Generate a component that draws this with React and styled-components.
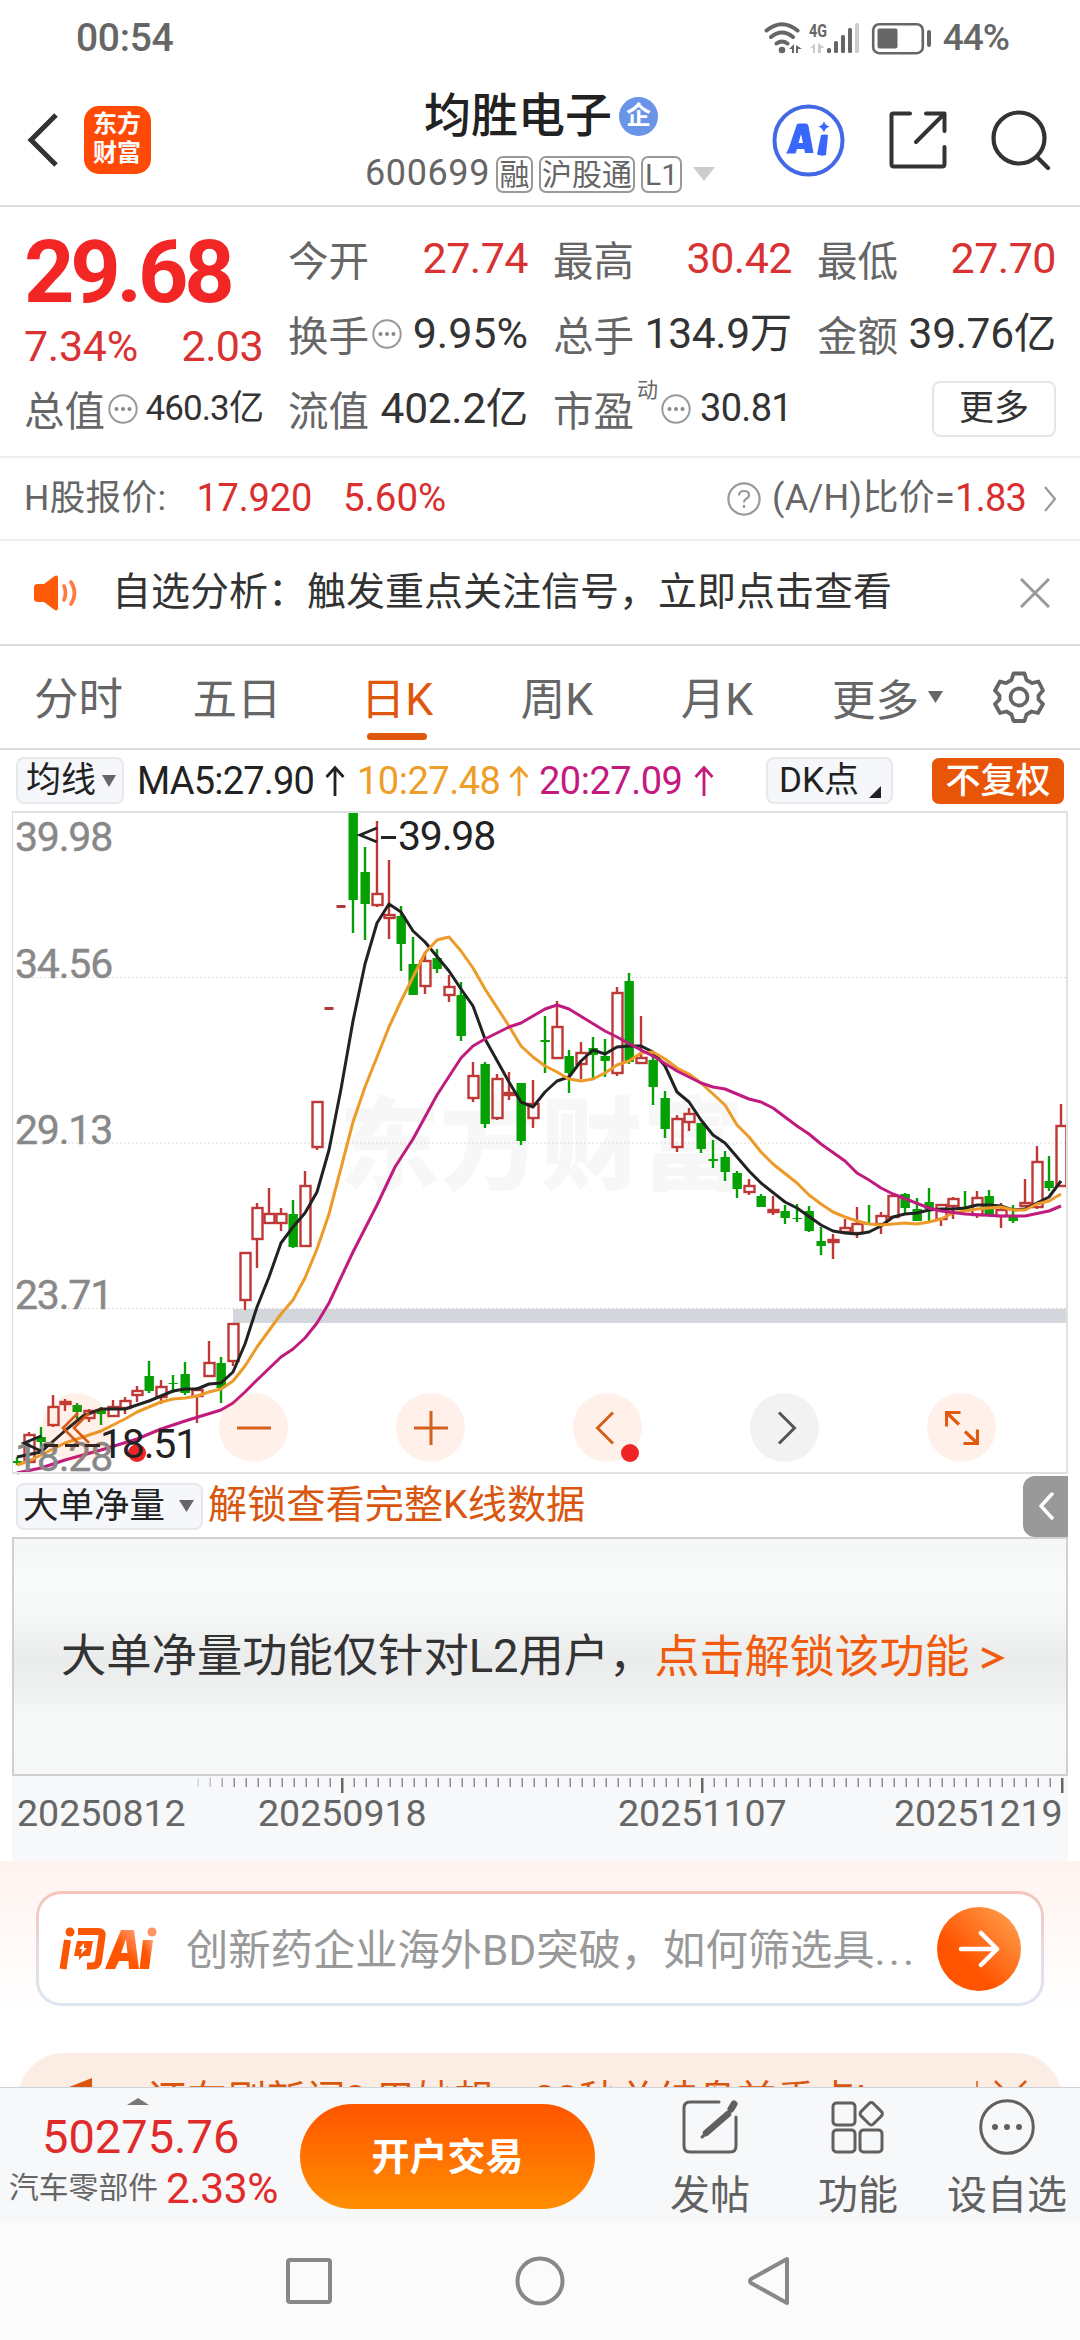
import styled, { createGlobalStyle } from "styled-components";

const GlobalStyle = createGlobalStyle`
  * { box-sizing: border-box; }
  body {
    margin: 0;
    background: #fff;
    font-family: Roboto, "Noto Sans CJK SC", sans-serif;
    color: #333;
  }
  svg { display: block; flex: none; }
`;

const Screen = styled.div`
  width: 1080px;
  height: 2340px;
  overflow: hidden;
  display: flex;
  flex-direction: column;
`;

const Txt = styled.span`
  font-size: ${(p) => p.$size}px;
  line-height: 1.2;
  color: ${(p) => p.$color || "inherit"};
  font-weight: ${(p) => p.$weight || 400};
  letter-spacing: ${(p) => p.$ls || 0}px;
  white-space: nowrap;
`;

/* ---------- status bar ---------- */

const StatusBar = styled.div`
  height: 75px;
  flex: none;
  display: flex;
  align-items: center;
  justify-content: space-between;
  padding: 2px 71px 0 76px;
  color: #666;
`;

const StatusRight = styled.div`
  display: flex;
  align-items: center;
  gap: 10px;
`;

/* ---------- header ---------- */

const Header = styled.header`
  height: 132px;
  flex: none;
  display: grid;
  grid-template-columns: 365px 350px 1fr;
  border-bottom: 2px solid #dcdcdc;
`;

const HeaderLeft = styled.div`
  display: flex;
  align-items: center;
  gap: 26px;
  padding-left: 27px;
`;

const BrandLogo = styled.div`
  width: 67px;
  height: 68px;
  border-radius: 15px;
  background: #ff4a05;
  color: #fff;
  font-size: 24px;
  line-height: 29px;
  font-weight: 700;
  padding: 4px 9px;
`;

const HeaderCenter = styled.div`
  padding-top: 14px;
`;

const TitleLine = styled.div`
  display: flex;
  align-items: center;
  gap: 7px;
  height: 54px;
  padding-left: 59px;
`;

const CompanyBadge = styled.span`
  width: 39px;
  height: 39px;
  border-radius: 50%;
  background: #6a94e8;
  color: #fff;
  font-size: 25px;
  line-height: 38px;
  font-weight: 700;
  text-align: center;
`;

const CodeLine = styled.div`
  display: flex;
  align-items: center;
  height: 62px;
`;

const Tag = styled.span`
  height: 37px;
  width: ${(p) => p.$w}px;
  margin-left: ${(p) => p.$ml || 6}px;
  border: 2px solid #999;
  border-radius: 7px;
  color: #666;
  font-size: 30px;
  line-height: 33px;
  display: flex;
  justify-content: center;
  white-space: nowrap;
`;

const HeaderRight = styled.div`
  display: flex;
  align-items: center;
  justify-content: space-between;
  padding: 0 29px 0 57px;
`;

/* ---------- quote ---------- */

const Quote = styled.section`
  height: 251px;
  flex: none;
  padding: 14px 0 0 24px;
  display: grid;
  grid-template-columns: 239px 240px 239px 239px;
  grid-template-rows: 75px 75px 75px;
  column-gap: 25px;
  border-bottom: 2px solid #eee;
`;

const PriceBlock = styled.div`
  grid-row: 1 / 3;
  display: flex;
  flex-direction: column;
`;

const BigPrice = styled.div`
  height: 103px;
  font-size: 88px;
  line-height: 102px;
  font-weight: 700;
  letter-spacing: -4.2px;
  color: #f32626;
`;

const Field = styled.div`
  display: flex;
  align-items: center;
  justify-content: space-between;
  height: ${(p) => p.$h || 75}px;
`;

const FieldLabel = styled.span`
  display: flex;
  align-items: center;
  gap: 3px;
  font-size: 40.5px;
  color: #666;
  white-space: nowrap;
`;

const Superscript = styled.span`
  font-size: 21px;
  line-height: 22px;
  align-self: flex-start;
`;

const MoreButton = styled.button`
  justify-self: end;
  align-self: center;
  width: 124px;
  height: 56px;
  border: 2px solid #e6e6e6;
  border-radius: 8px;
  background: #fff;
  font: 400 35px/50px Roboto, "Noto Sans CJK SC", sans-serif;
  color: #333;
  padding: 0;
`;

const HShareRow = styled.div`
  height: 83px;
  flex: none;
  display: flex;
  align-items: center;
  padding: 0 23px 0 24px;
  border-bottom: 2px solid #eee;
  color: #666;
`;

const Spacer = styled.div`
  width: ${(p) => p.$w || 0}px;
  flex: ${(p) => (p.$w ? "none" : 1)};
`;

const NoticeRow = styled.div`
  height: 105px;
  flex: none;
  display: flex;
  align-items: center;
  padding: 0 30px 0 33px;
  border-bottom: 2px solid #dcdcdc;
`;

/* ---------- tabs ---------- */

const Tabs = styled.nav`
  height: 104px;
  flex: none;
  display: flex;
  align-items: center;
  border-bottom: 2px solid #dcdcdc;
`;

const Tab = styled.div`
  width: ${(p) => (p.$first ? 157 : 160)}px;
  height: 102px;
  display: flex;
  flex-direction: column;
  align-items: center;
  padding-top: 24px;
  font-size: 44.5px;
  line-height: 60px;
  color: ${(p) => (p.$active ? "#df560d" : "#666")};
  &::after {
    content: "";
    width: 60px;
    height: 7px;
    margin-top: 3px;
    border-radius: 4px;
    background: ${(p) => (p.$active ? "#df560d" : "transparent")};
  }
`;

const TabMore = styled.div`
  display: flex;
  align-items: center;
  gap: 9px;
  padding-left: 35px;
  width: 196px;
  font-size: 43.5px;
  color: #666;
  white-space: nowrap;
`;

const IndicatorBar = styled.div`
  height: 61px;
  flex: none;
  display: flex;
  align-items: center;
  padding: 0 16px;
`;

const Chip = styled.div`
  width: ${(p) => p.$w}px;
  height: 47px;
  display: flex;
  align-items: center;
  gap: ${(p) => p.$gap || 6}px;
  padding-left: ${(p) => p.$pl || 8}px;
  border: 2px solid #e6e8ec;
  border-radius: 8px;
  background: #f6f7fa;
  color: #222;
  font-size: ${(p) => p.$size || 35}px;
  line-height: 42px;
  white-space: nowrap;
`;

const MaText = styled.span`
  width: ${(p) => p.$w}px;
  display: flex;
  align-items: center;
  justify-content: space-between;
  font-size: 38px;
  letter-spacing: ${(p) => p.$ls}px;
  color: ${(p) => p.$color};
`;

const AdjustButton = styled.div`
  width: 132px;
  height: 46px;
  border-radius: 7px;
  background: #e95506;
  color: #fff;
  font-size: 35px;
  font-weight: 500;
  line-height: 48px;
  text-align: center;
`;

/* ---------- chart ---------- */

const ChartBox = styled.div`
  position: relative;
  height: 664px;
  flex: none;
  padding-left: 12px;
`;

const ChartControls = styled.div`
  position: absolute;
  left: 42px;
  top: 582px;
  display: flex;
  gap: 108px;
`;

const RoundButton = styled.div`
  position: relative;
  width: 69px;
  height: 69px;
  border-radius: 50%;
  background: ${(p) => (p.$muted ? "#f2f2f2" : "rgba(255, 90, 10, 0.085)")};
  display: flex;
  align-items: center;
  justify-content: center;
`;

const RedDot = styled.span`
  position: absolute;
  left: ${(p) => p.$x}px;
  top: 51px;
  width: 18px;
  height: 18px;
  border-radius: 50%;
  background: #ee2524;
`;

const LowLabel = styled.span`
  position: absolute;
  left: 100px;
  top: 609px;
  font-size: 41px;
  line-height: 48px;
  letter-spacing: -1.2px;
  color: #222;
`;

const SubHeader = styled.div`
  height: 62px;
  flex: none;
  display: flex;
  align-items: center;
  padding: 0 12px 0 16px;
`;

const CollapseHandle = styled.div`
  width: 45px;
  height: 61px;
  border-radius: 12px 0 0 12px;
  background: #999;
  display: flex;
  align-items: center;
  justify-content: center;
`;

const LockedPanel = styled.div`
  height: 239px;
  flex: none;
  width: 1056px;
  margin-left: 12px;
  border: 2px solid #d0d0d0;
  background: linear-gradient(#f5f7f6, #f9fafa 18%, #f6f7f7 32%, #eaecec 52%, #eff0f0 63%, #f8f9f9 78%, #f6f7f7);
  display: flex;
  align-items: center;
  padding: 2px 0 0 47px;
  color: #333;
`;

const Axis = styled.div`
  height: 85px;
  flex: none;
  width: 1056px;
  margin-left: 12px;
  background: #f7f8fa;
`;

const AxisLabels = styled.div`
  display: grid;
  grid-template-columns: 241px 360px 276px 1fr;
  padding-left: 5px;
  margin-top: -2px;
`;

/* ---------- ask ai ---------- */

const AskSection = styled.div`
  height: 226px;
  flex: none;
  padding: 30px 18px 0;
  overflow: hidden;
  background: linear-gradient(#fff3ef, #fffdfc 55%, #fff 70%);
`;

const AskBox = styled.div`
  width: 1008px;
  height: 115px;
  margin-left: 18px;
  border: 3px solid transparent;
  border-radius: 25px;
  background: linear-gradient(#fff, #fff) padding-box,
    linear-gradient(#f5c4bb, #e6dbe6 60%, #dde6f2) border-box;
  display: flex;
  align-items: center;
  padding: 0 20px 0 20px;
`;

const Placeholder = styled.div`
  padding-top: 4px;
  font-size: 42.3px;
  line-height: 50px;
  color: #999;
  white-space: nowrap;
`;

const Ellipsis = styled.span`
  letter-spacing: 3px;
`;

const GoButton = styled.div`
  width: 84px;
  height: 84px;
  border-radius: 50%;
  background: linear-gradient(45deg, #ff5500 35%, #ff9a48 90%);
  display: flex;
  align-items: center;
  justify-content: center;
`;

const Banner = styled.div`
  height: 100px;
  margin-top: 47px;
  border-radius: 46px;
  background: #fcede4;
  display: flex;
  align-items: flex-start;
  padding: 24px 34px 0 46px;
  color: #d9560f;
`;

/* ---------- bottom ---------- */

const BottomBar = styled.div`
  height: 135px;
  flex: none;
  border-top: 1px solid #cfd3da;
  background: #f7f8fa;
  display: flex;
`;

const SectorBox = styled.div`
  width: 300px;
  padding: 10px 0 0 9px;
`;

const SectorIndex = styled.div`
  padding-left: 33px;
  font-size: 47px;
  line-height: 64px;
  color: #e02b2b;
`;

const SectorLine = styled.div`
  display: flex;
  align-items: center;
  gap: 8px;
  height: 38px;
`;

const TradeButton = styled.div`
  width: 295px;
  height: 105px;
  margin-top: 16px;
  border-radius: 53px;
  background: linear-gradient(#ff5500, #ff8e00);
  color: #fff;
  font-size: 38px;
  font-weight: 700;
  line-height: 107px;
  text-align: center;
`;

const Action = styled.div`
  width: ${(p) => p.$w}px;
  margin-left: ${(p) => p.$ml}px;
  padding-top: 11px;
  display: flex;
  flex-direction: column;
  align-items: center;
  font-size: 40px;
  line-height: 48px;
  gap: 17px;
  color: #606060;
  white-space: nowrap;
`;

const NavBar = styled.div`
  flex: 1;
  background: #fbfbfc;
  display: flex;
  align-items: center;
  justify-content: space-between;
  padding: 0 289px 0 285px;
`;

/* [kind, high, open/close top, bottom, low] in screen pixels, one every 12px */
const CANDLES = [
  ["g", 1458, 1462, 1464, 1466], ["r", 1433, 1436, 1463, 1464], ["g", 1428, 1438, 1443, 1448],
  ["r", 1396, 1408, 1426, 1428], ["r", 1400, 1403, 1405, 1412], ["g", 1404, 1406, 1413, 1420],
  ["r", 1410, 1412, 1419, 1423], ["g", 1408, 1410, 1415, 1426], ["r", 1401, 1408, 1417, 1417],
  ["r", 1398, 1402, 1409, 1415], ["r", 1387, 1392, 1396, 1403], ["g", 1362, 1377, 1392, 1394],
  ["r", 1381, 1388, 1398, 1405], ["g", 1376, 1384, 1385, 1394], ["g", 1363, 1375, 1394, 1396],
  ["r", 1388, 1391, 1397, 1424], ["r", 1342, 1364, 1377, 1377], ["g", 1358, 1364, 1389, 1404],
  ["r", 1324, 1325, 1362, 1367], ["r", 1254, 1254, 1301, 1311], ["r", 1204, 1209, 1240, 1269],
  ["r", 1189, 1215, 1224, 1224], ["r", 1209, 1215, 1224, 1232], ["g", 1201, 1215, 1248, 1249],
  ["r", 1172, 1187, 1247, 1247], ["r", 1102, 1103, 1148, 1151], ["d", 1009, 1009, 1010, 1010],
  ["d", 907, 907, 908, 908], ["g", 813, 813, 901, 934], ["g", 848, 873, 905, 941],
  ["r", 822, 895, 906, 908], ["r", 861, 916, 919, 940], ["g", 907, 917, 945, 972],
  ["g", 938, 965, 996, 996], ["r", 954, 962, 987, 995], ["g", 950, 959, 970, 974],
  ["r", 976, 988, 996, 1003], ["g", 983, 996, 1037, 1042], ["r", 1063, 1077, 1099, 1103],
  ["g", 1063, 1065, 1125, 1129], ["r", 1075, 1080, 1119, 1121], ["r", 1073, 1094, 1096, 1101],
  ["g", 1084, 1084, 1142, 1146], ["r", 1081, 1105, 1119, 1129], ["g", 1017, 1041, 1043, 1074],
  ["r", 1002, 1028, 1059, 1059], ["g", 1051, 1057, 1074, 1094], ["r", 1043, 1054, 1065, 1080],
  ["g", 1038, 1049, 1056, 1079], ["g", 1040, 1057, 1062, 1078], ["r", 988, 994, 1074, 1077],
  ["g", 974, 982, 1063, 1065], ["r", 1017, 1059, 1064, 1064], ["g", 1055, 1061, 1088, 1106],
  ["g", 1092, 1099, 1130, 1139], ["r", 1116, 1120, 1148, 1153], ["r", 1109, 1115, 1123, 1132],
  ["g", 1124, 1124, 1150, 1154], ["g", 1141, 1160, 1162, 1169], ["g", 1152, 1158, 1173, 1182],
  ["g", 1172, 1174, 1190, 1199], ["r", 1180, 1187, 1193, 1196], ["g", 1195, 1197, 1208, 1208],
  ["r", 1197, 1211, 1213, 1216], ["g", 1206, 1212, 1219, 1225], ["g", 1205, 1219, 1220, 1223],
  ["g", 1207, 1212, 1232, 1233], ["g", 1228, 1242, 1247, 1256], ["r", 1235, 1241, 1243, 1260],
  ["r", 1220, 1229, 1233, 1235], ["r", 1208, 1225, 1234, 1239], ["g", 1206, 1224, 1226, 1226],
  ["r", 1213, 1217, 1225, 1235], ["r", 1196, 1197, 1218, 1218], ["g", 1194, 1195, 1209, 1215],
  ["g", 1199, 1210, 1222, 1222], ["g", 1189, 1203, 1210, 1222], ["r", 1206, 1206, 1220, 1227],
  ["r", 1198, 1200, 1207, 1220], ["g", 1192, 1209, 1211, 1212], ["r", 1192, 1199, 1216, 1219],
  ["g", 1191, 1197, 1217, 1217], ["r", 1204, 1211, 1217, 1229], ["g", 1206, 1217, 1222, 1224],
  ["r", 1180, 1204, 1207, 1208], ["r", 1147, 1163, 1208, 1210], ["g", 1157, 1182, 1189, 1192],
  ["r", 1105, 1127, 1187, 1187],
];

const MA5 =
  "17,1458 41,1453 50,1445 67,1430 83,1417 101,1410 125,1410 149,1402 173,1392 185,1390 197,1390 209,1385 221,1384 233,1373 245,1345 257,1308 269,1278 281,1244 293,1228 305,1214 317,1193 329,1151 341,1090 353,1022 365,965 377,924 389,905 401,913 413,932 425,943 449,972 461,990 473,1007 485,1040 509,1083 521,1103 533,1108 545,1093 557,1082 569,1078 581,1062 593,1051 605,1055 617,1048 629,1047 641,1047 653,1053 665,1067 677,1093 689,1103 701,1121 713,1136 725,1144 749,1172 761,1184 785,1203 797,1209 821,1226 833,1232 845,1234 857,1235 869,1233 881,1227 893,1218 905,1215 917,1214 929,1211 941,1210 953,1210 965,1209 977,1206 989,1206 1001,1207 1013,1211 1025,1210 1037,1204 1049,1198 1061,1182";
const MA10 =
  "17,1466 29,1462 41,1456 65,1444 101,1432 125,1420 137,1413 149,1408 161,1403 173,1400 185,1399 197,1397 209,1393 221,1390 233,1382 245,1367 257,1348 281,1315 293,1301 305,1279 317,1250 329,1215 341,1169 353,1123 365,1088 377,1058 389,1028 401,1002 425,954 437,941 449,938 461,952 473,969 485,990 509,1027 521,1047 533,1058 545,1067 557,1073 569,1080 581,1082 593,1080 605,1074 617,1066 629,1062 641,1054 653,1053 665,1060 677,1069 689,1075 701,1084 713,1095 725,1106 737,1126 749,1138 761,1153 773,1165 797,1184 809,1196 821,1205 833,1213 845,1218 857,1222 869,1225 881,1226 905,1224 917,1225 929,1223 941,1220 953,1214 965,1212 977,1210 989,1209 1001,1208 1013,1211 1025,1211 1037,1205 1049,1202 1061,1195";
const MA20 =
  "17,1474 41,1469 65,1461 101,1451 137,1440 161,1430 185,1422 221,1411 233,1404 245,1393 257,1381 281,1358 293,1350 305,1339 317,1324 329,1304 353,1253 377,1206 395,1168 413,1140 437,1096 461,1059 473,1047 485,1040 509,1028 521,1024 545,1010 557,1006 569,1010 605,1032 617,1038 641,1051 653,1057 677,1072 701,1084 713,1088 725,1090 737,1095 749,1100 761,1103 773,1109 785,1118 797,1127 809,1135 821,1145 845,1162 857,1174 869,1181 881,1189 893,1195 929,1209 941,1212 965,1215 1001,1217 1025,1217 1049,1212 1061,1207";

const LEVELS = [
  ["39.98", 852], ["34.56", 979], ["29.13", 1145], ["23.71", 1310], ["18.28", 1472],
];

const Candle = ({ index, data }) => {
  const [kind, high, top, bottom, low] = data;
  const x = 17 + index * 12;
  if (kind === "d") return <rect x={x - 4.5} y={top - 1} width="9" height="3" fill="#b03a3a" />;
  if (kind === "g") {
    return (
      <g fill="#04a004">
        <rect x={x - 1.2} y={high} width="2.4" height={low - high} />
        <rect x={x - 4.5} y={top} width="9.4" height={bottom - top} />
      </g>
    );
  }
  return (
    <g stroke="#bf3838" strokeWidth="2.4" fill="none">
      <path d={`M${x} ${high}V${top}M${x} ${bottom}V${low}`} />
      <rect x={x - 4.5} y={top} width="10" height={bottom - top} />
    </g>
  );
};

const KLineChart = () => (
  <svg width="1056" height="664" viewBox="12 812 1056 664">
    <text x="339" y="1183" fontSize="101" fontWeight="900" fill="#f7f7f7">东方财富</text>
    <g stroke="#dcdcdc" strokeDasharray="2 2">
      <path d="M12 978.5H1067M12 1144H1067M12 1309.5H1067" />
    </g>
    <rect x="233" y="1310" width="834" height="14" fill="#d3d6db" />
    {CANDLES.map((c, i) => (
      <Candle key={i} index={i} data={c} />
    ))}
    <g fill="none" strokeWidth="3" strokeLinejoin="round">
      <polyline points={MA5} stroke="#222" />
      <polyline points={MA10} stroke="#ec9a28" />
      <polyline points={MA20} stroke="#c01b7e" />
    </g>
    <path d="M12.5 813V1474" stroke="#ddd" />
    <path d="M12 813H1068M1067 813V1474M12 1474H1068" stroke="#e0e0e0" strokeWidth="2" />
    <g fontSize="41" letterSpacing="-1.2" fill="#888" stroke="#888" strokeWidth="0.4">
      {LEVELS.map(([label, y]) => (
        <text key={label} x="15" y={y}>{label}</text>
      ))}
    </g>
    <text x="398" y="850.5" fontSize="41" letterSpacing="-1.2" fill="#222">39.98</text>
    <g stroke="#222" strokeWidth="2.8" fill="none">
      <path d="M377 829L360 836L377 843M381 838.5H396" />
      <path d="M41 1437L24 1444L41 1452M44 1446.5H58M65 1446.5H79M85 1446.5H100" />
    </g>
  </svg>
);

const Ticks = () => {
  const ticks = [];
  for (let x = 198; x <= 1062; x += 12) ticks.push(x);
  return (
    <svg width="1056" height="17" viewBox="12 1776 1056 17">
      {ticks.map((x) => {
        const major = (x - 342) % 360 === 0;
        return (
          <rect
            key={x}
            x={x - (major ? 1 : 0.5)}
            y="1778"
            width={major ? 2.5 : 1.5}
            height={major ? 15 : 9}
            fill={major ? "#666" : "#8a8a8a"}
            opacity={x < 234 ? (x - 180) / 60 : 1}
          />
        );
      })}
    </svg>
  );
};

const Dots = () => (
  <svg width="30" height="30" viewBox="0 0 30 30">
    <circle cx="15" cy="15" r="13.7" fill="none" stroke="#999" strokeWidth="2" />
    <g fill="#888">
      <circle cx="8.5" cy="15" r="2" />
      <circle cx="15" cy="15" r="2" />
      <circle cx="21.5" cy="15" r="2" />
    </g>
  </svg>
);

const Caret = ({ w = 14, h = 12, color = "#666" }) => (
  <svg width={w} height={h} viewBox="0 0 10 10" preserveAspectRatio="none">
    <path d="M0 0H10L5 10Z" fill={color} />
  </svg>
);

const UpArrow = () => (
  <svg width="20" height="32" viewBox="0 0 20 32" fill="none" stroke="currentColor" strokeWidth="2.8">
    <path d="M10 31V3M1.5 12L10 2.5L18.5 12" />
  </svg>
);

const StatusIcons = () => (
  <svg width="170" height="36" viewBox="761 18 170 36">
    <g fill="none" stroke="#666" strokeWidth="4" strokeLinecap="round">
      <path d="M764.5 28.5Q780 16 795.5 28.5M769 35Q780 26 791 35M774.5 41.5Q780 37.5 785.5 41.5" />
    </g>
    <circle cx="780" cy="48" r="3.3" fill="#666" />
    <path d="M787 47L792 42V51H790V47ZM794 43L800 47H796V51H794Z" fill="#666" />
    <text x="807" y="34.5" fontSize="19" fontWeight="700" fill="#666" textLength="18" lengthAdjust="spacingAndGlyphs">4G</text>
    <path d="M808 46L813 41V51H811V46ZM816 41L823 46H819V51H816Z" fill="#ccc" />
    <g fill="#666">
      <rect x="825" y="46" width="4" height="5" rx="1.5" />
      <rect x="832" y="39" width="4" height="12" rx="1.5" />
      <rect x="839" y="33" width="4" height="18" rx="1.5" />
      <rect x="846" y="26" width="4" height="25" rx="1.5" />
      <rect x="853" y="21" width="4" height="30" rx="1.5" fill="#ccc" />
    </g>
    <rect x="871.2" y="22.2" width="49.6" height="29" rx="6" fill="none" stroke="#666" strokeWidth="2.6" />
    <rect x="875.5" y="26.5" width="20" height="20" rx="2" fill="#666" />
    <rect x="925" y="28" width="4" height="17" rx="2" fill="#666" />
  </svg>
);

const AiIcon = () => (
  <svg width="73" height="73" viewBox="0 0 73 73">
    <circle cx="36.5" cy="36.5" r="34" fill="none" stroke="#4368e6" strokeWidth="4" />
    <g fill="#3867fb">
      <path fillRule="evenodd" d="M25 20Q26 19.5 28 19.5H34Q36 19.5 36.5 22L41.5 49H33L32.2 45H25L23.5 49.5H14Q17 45 19.5 36Z M29 30L26.5 39H31Z" />
      <path d="M49 31Q53 30 56 31L54 51Q50 52.5 45 50.5Z" />
      <path d="M52 17Q53 21.5 57.5 22.5Q53 24 52 28.5Q50.5 24 46.5 22.5Q51 21.5 52 17Z" />
    </g>
  </svg>
);

const AskLogo = () => (
  <svg width="98" height="44" viewBox="0 0 98 44">
    <defs>
      <linearGradient id="ask" x1="0" x2="1" y1="1" y2="0">
        <stop offset="0.5" stopColor="#ff5500" />
        <stop offset="1" stopColor="#ffa27a" />
      </linearGradient>
    </defs>
    <g fill="none" stroke="#fb5603" strokeWidth="7" strokeLinejoin="round">
      <path d="M8.5 13L4 42" />
      <path d="M19 4.500H39Q44 4.500 43 9L39.500 34Q38.500 39 33 39H28" />
    </g>
    <circle cx="11" cy="5" r="4.5" fill="#fb5603" />
    <path fillRule="evenodd" fill="#fb5603" d="M18 14H34L31 29H24L20 33V29H15Z M25 16L20 22H23L22 27L28 21H25Z" />
    <path fillRule="evenodd" fill="url(#ask)" d="M62 3H75L80 42H70L69.500 34H60L56 42H46Z M67 12L62 26H68.500Z" />
    <path fill="url(#ask)" d="M84 13H94L90 42H80.500Z" />
    <circle cx="93" cy="5" r="4.5" fill="#ff9468" />
  </svg>
);

const TABS = ["分时", "五日", "日K", "周K", "月K"];

const App = () => {
  return (
    <Screen>
      <GlobalStyle />
      <StatusBar>
        <Txt $size={39} $weight={500} $ls={-0.3}>00:54</Txt>
        <StatusRight>
          <StatusIcons />
          <Txt $size={37} $weight={500} $ls={-1}>44%</Txt>
        </StatusRight>
      </StatusBar>

      <Header>
        <HeaderLeft>
          <svg width="31" height="54" viewBox="0 0 31 54" fill="none" stroke="#333" strokeWidth="5">
            <path d="M29 2L4 27L29 52" />
          </svg>
          <BrandLogo>东方财富</BrandLogo>
        </HeaderLeft>
        <HeaderCenter>
          <TitleLine>
            <Txt $size={47} $color="#222" $weight={500}>均胜电子</Txt>
            <CompanyBadge>企</CompanyBadge>
          </TitleLine>
          <CodeLine>
            <Txt $size={36} $color="#666" $ls={0.6}>600699</Txt>
            <Tag $w={37} $ml={6}>融</Tag>
            <Tag $w={97}>沪股通</Tag>
            <Tag $w={41}>L1</Tag>
            <Spacer $w={11} />
            <Caret w={22} h={14} color="#ccc" />
          </CodeLine>
        </HeaderCenter>
        <HeaderRight>
          <AiIcon />
          <svg width="58" height="58" viewBox="0 0 58 58" fill="none" stroke="#333" strokeWidth="4" strokeLinecap="round" strokeLinejoin="round">
            <path d="M21 2.5H4Q2.5 2.5 2.5 4V53Q2.5 55.5 5 55.5H53Q55.5 55.5 55.5 53V36M37 2.5H55.5V20M54.5 3.5L27 31" />
          </svg>
          <svg width="60" height="60" viewBox="0 0 60 60" fill="none" stroke="#333" strokeWidth="4.2" strokeLinecap="round">
            <circle cx="28" cy="28" r="25.5" />
            <path d="M46 47L57 58" />
          </svg>
        </HeaderRight>
      </Header>

      <Quote>
        <PriceBlock>
          <BigPrice>29.68</BigPrice>
          <Field $h={46}>
            <Txt $size={43} $color="#d93232" $ls={-0.3}>7.34%</Txt>
            <Txt $size={43} $color="#d93232" $ls={-0.6}>2.03</Txt>
          </Field>
        </PriceBlock>
        <Field>
          <FieldLabel>今开</FieldLabel>
          <Txt $size={43} $color="#d93232" $ls={-0.5}>27.74</Txt>
        </Field>
        <Field>
          <FieldLabel>最高</FieldLabel>
          <Txt $size={43} $color="#d93232" $ls={-0.5}>30.42</Txt>
        </Field>
        <Field>
          <FieldLabel>最低</FieldLabel>
          <Txt $size={43} $color="#d93232" $ls={-0.5}>27.70</Txt>
        </Field>
        <Field>
          <FieldLabel>换手<Dots /></FieldLabel>
          <Txt $size={43}>9.95%</Txt>
        </Field>
        <Field>
          <FieldLabel>总手</FieldLabel>
          <Txt $size={42.5} $ls={-0.3}>134.9万</Txt>
        </Field>
        <Field>
          <FieldLabel>金额</FieldLabel>
          <Txt $size={42.5} $ls={-0.3}>39.76亿</Txt>
        </Field>
        <Field>
          <FieldLabel>总值<Dots /></FieldLabel>
          <Txt $size={35} $ls={-0.9}>460.3亿</Txt>
        </Field>
        <Field>
          <FieldLabel>流值</FieldLabel>
          <Txt $size={42.5} $ls={-0.3}>402.2亿</Txt>
        </Field>
        <Field>
          <FieldLabel>市盈<Superscript>动</Superscript><Dots /></FieldLabel>
          <Txt $size={38} $ls={-0.7}>30.81</Txt>
        </Field>
        <MoreButton>更多</MoreButton>
      </Quote>

      <HShareRow>
        <Txt $size={35.5} $ls={0.4}>H股报价:</Txt>
        <Spacer $w={30} />
        <Txt $size={38} $color="#d92f2f" $ls={-0.2}>17.920</Txt>
        <Spacer $w={31} />
        <Txt $size={38.5} $color="#d92f2f">5.60%</Txt>
        <Spacer />
        <svg width="34" height="34" viewBox="0 0 34 34" fill="none" stroke="#999" strokeWidth="2.2">
          <circle cx="17" cy="17" r="15.6" />
          <path d="M12 13.5Q12 9 17 9Q22 9 22 13Q22 15.5 19 17Q17 18 17 20.500M17 23V26" />
        </svg>
        <Spacer $w={11} />
        <Txt $size={36} $ls={0.3}>(A/H)比价=</Txt>
        <Txt $size={38} $color="#d92f2f" $ls={-0.8}>1.83</Txt>
        <Spacer $w={18} />
        <svg width="13" height="26" viewBox="0 0 13 26" fill="none" stroke="#999" strokeWidth="2.2">
          <path d="M1 1L11 13L1 25" />
        </svg>
      </HShareRow>

      <NoticeRow>
        <svg width="46" height="36" viewBox="0 0 46 36">
          <path d="M1 12Q1 9 5 9H11L21 1.5Q25 -1 25 3V33Q25 37 21 34.5L11 27H5Q1 27 1 24Z" fill="#ff5a0a" />
          <path d="M31 11Q34 18 31 25M38 7Q45 18 38 29" fill="none" stroke="#ff7a3c" strokeWidth="3.6" strokeLinecap="round" />
        </svg>
        <Spacer $w={33} />
        <Txt $size={39}>自选分析：触发重点关注信号，立即点击查看</Txt>
        <Spacer />
        <svg width="30" height="30" viewBox="0 0 30 30" stroke="#999" strokeWidth="3">
          <path d="M1 1L29 29M29 1L1 29" />
        </svg>
      </NoticeRow>

      <Tabs>
        {TABS.map((t, i) => (
          <Tab key={t} $first={i === 0} $active={t === "日K"}>{t}</Tab>
        ))}
        <TabMore>更多<Caret w={15} /></TabMore>
        <svg width="52" height="52" viewBox="0 0 52 52" fill="none" stroke="#666" strokeWidth="3.8" strokeLinejoin="round">
          <path d="M20.5 2.5H31.5L33.5 9L39 12.2L45.5 10.5L50 19.5L45.5 24.5V28.5L50 33L45 42L38.5 40.5L33.5 43.5L31.5 50H20.5L18.5 43.5L13.5 40.5L7 42L2 33L6.5 28.5V24.5L2 19.5L7 10.5L13 12.2L18.5 9Z" />
          <circle cx="26" cy="26" r="8.5" />
        </svg>
      </Tabs>

      <IndicatorBar>
        <Chip $w={108}>均线<Caret /></Chip>
        <Spacer $w={13} />
        <MaText $w={208} $ls={-0.8} $color="#222">MA5:27.90<UpArrow /></MaText>
        <Spacer $w={12} />
        <MaText $w={172} $ls={-0.5} $color="#ee9d28">10:27.48<UpArrow /></MaText>
        <Spacer $w={10} />
        <MaText $w={175} $ls={-0.5} $color="#c41a80">20:27.09<UpArrow /></MaText>
        <Spacer />
        <Chip $w={127} $pl={11} $gap={10}>
          DK点
          <svg width="12" height="34" viewBox="0 0 12 34"><path d="M12 22V34H0Z" fill="#222" /></svg>
        </Chip>
        <Spacer $w={39} />
        <AdjustButton>不复权</AdjustButton>
      </IndicatorBar>

      <ChartBox>
        <KLineChart />
        <ChartControls>
          <RoundButton>
            <RedDot $x={86} />
            <svg width="32" height="34" viewBox="0 0 32 34" fill="none" stroke="#d95a14" strokeWidth="2.6">
              <path d="M17 2L2 17L17 32M28 2L13 17L28 32" />
            </svg>
          </RoundButton>
          <RoundButton>
            <svg width="34" height="34" stroke="#d4601c" strokeWidth="3"><path d="M0 17H34" /></svg>
          </RoundButton>
          <RoundButton>
            <svg width="34" height="34" stroke="#d4601c" strokeWidth="3"><path d="M0 17H34M17 0V34" /></svg>
          </RoundButton>
          <RoundButton>
            <svg width="34" height="34" fill="none" stroke="#d4601c" strokeWidth="3"><path d="M22 1.5L6.5 17L22 32.5" /></svg>
            <RedDot $x={48} />
          </RoundButton>
          <RoundButton $muted>
            <svg width="34" height="34" fill="none" stroke="#555" strokeWidth="3"><path d="M11 1.5L26.5 17L11 32.5" /></svg>
          </RoundButton>
          <RoundButton>
            <svg width="34" height="34" fill="none" stroke="#e05a10" strokeWidth="3.2">
              <path d="M1.5 15.5V1.5H15.5M1.5 1.5L14 13.5M32.5 18.5V32.5H18.5M32.5 32.5L20 20.5" />
            </svg>
          </RoundButton>
        </ChartControls>
        <LowLabel>18.51</LowLabel>
      </ChartBox>

      <SubHeader>
        <Chip $w={187} $pl={5} $gap={14} $size={35.5}>大单净量<Caret w={15} /></Chip>
        <Spacer $w={5} />
        <Txt $size={39.2} $color="#d9560f">解锁查看完整K线数据</Txt>
        <Spacer />
        <CollapseHandle>
          <svg width="16" height="28" viewBox="0 0 16 28" fill="none" stroke="#fff" strokeWidth="3.5" strokeLinecap="round" strokeLinejoin="round">
            <path d="M14 2L3 14L14 26" />
          </svg>
        </CollapseHandle>
      </SubHeader>
      <LockedPanel>
        <Txt $size={45.3}>大单净量功能仅针对L2用户，</Txt>
        <Txt $size={45} $color="#f25a0e">点击解锁该功能</Txt>
        <Spacer $w={12} />
        <svg width="24" height="22" viewBox="0 0 24 22" fill="none" stroke="#f25a0e" strokeWidth="3.6">
          <path d="M1 2L20 11L1 20" />
        </svg>
      </LockedPanel>
      <Axis>
        <Ticks />
        <AxisLabels>
          {["20250812", "20250918", "20251107", "20251219"].map((d) => (
            <Txt key={d} $size={37.5} $color="#666">{d}</Txt>
          ))}
        </AxisLabels>
      </Axis>

      <AskSection>
        <AskBox>
          <AskLogo />
          <Spacer $w={29} />
          <Placeholder>
            创新药企业海外BD突破，如何筛选具<Ellipsis>...</Ellipsis>
          </Placeholder>
          <Spacer />
          <GoButton>
            <svg width="42" height="38" viewBox="0 0 42 38" fill="none" stroke="#fff" strokeWidth="4.5" strokeLinecap="round" strokeLinejoin="round">
              <path d="M3 19H39M23 3L39 19L23 35" />
            </svg>
          </GoButton>
        </AskBox>
        <Banner>
          <svg width="30" height="30" viewBox="0 0 30 30"><path d="M0 12L28 1V30H0Z" fill="#d9560f" /></svg>
          <Spacer $w={54} />
          <Txt $size={39} $ls={0.6}>还在刷新闻? 用妙想，30秒总结盘前重点!</Txt>
          <Spacer />
          <svg width="52" height="34" viewBox="0 0 52 34" fill="none" stroke="#d9560f">
            <path d="M1 4V34" strokeWidth="1.5" />
            <path d="M19 4L48 33M50 4L21 33" strokeWidth="2.5" />
          </svg>
        </Banner>
      </AskSection>

      <BottomBar>
        <SectorBox>
          <svg width="258" height="7" viewBox="0 0 258 7"><path d="M118 7L129 0L140 7Z" fill="#777" /></svg>
          <SectorIndex>50275.76</SectorIndex>
          <SectorLine>
            <Txt $size={29.8} $color="#666">汽车零部件</Txt>
            <Txt $size={42.5} $color="#e02b2b" $ls={-0.4}>2.33%</Txt>
          </SectorLine>
        </SectorBox>
        <TradeButton>开户交易</TradeButton>
        <Action $w={120} $ml={55}>
          <svg width="56" height="56" viewBox="0 0 56 56" fill="none" stroke="#606060" strokeWidth="3" strokeLinecap="round">
            <path d="M37 3H8Q2 3 2 9V47Q2 53 8 53H48Q54 53 54 47V18" />
            <path d="M49 10L52 5" strokeWidth="7" />
            <path d="M46 15L24 34" strokeWidth="6.5" />
            <path d="M26 33L20 38" strokeWidth="3" />
          </svg>
          发帖
        </Action>
        <Action $w={120} $ml={28}>
          <svg width="56" height="56" viewBox="0 0 56 56" fill="none" stroke="#606060" strokeWidth="3">
            <rect x="3" y="4" width="22" height="22" rx="3.5" />
            <rect x="3" y="31" width="22" height="22" rx="3.5" />
            <rect x="30" y="31" width="22" height="22" rx="3.5" />
            <rect x="32.5" y="6" width="17.5" height="17.5" rx="3" transform="rotate(45 41.25 14.75)" />
          </svg>
          功能
        </Action>
        <Action $w={130} $ml={24}>
          <svg width="56" height="56" viewBox="0 0 56 56">
            <circle cx="28" cy="28" r="26.3" fill="none" stroke="#606060" strokeWidth="3" />
            <g fill="#606060">
              <circle cx="16" cy="28" r="3" />
              <circle cx="28" cy="28" r="3" />
              <circle cx="40" cy="28" r="3" />
            </g>
          </svg>
          设自选
        </Action>
      </BottomBar>

      <NavBar>
        <svg width="48" height="48" viewBox="0 0 48 48" fill="none" stroke="#888" strokeWidth="4">
          <rect x="3" y="3" width="42" height="42" rx="2" />
        </svg>
        <svg width="50" height="50" viewBox="0 0 50 50" fill="none" stroke="#888" strokeWidth="4">
          <circle cx="25" cy="25" r="22.5" />
        </svg>
        <svg width="44" height="50" viewBox="0 0 44 50" fill="none" stroke="#888" strokeWidth="4" strokeLinejoin="round">
          <path d="M40 3V47L4 27Q2 25 4 23Z" />
        </svg>
      </NavBar>
    </Screen>
  );
};

export default App;
